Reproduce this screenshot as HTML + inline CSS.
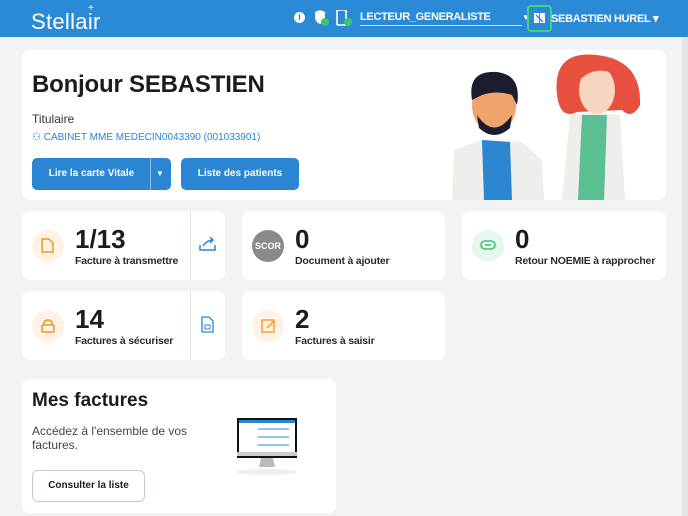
<!DOCTYPE html><html><head><meta charset="utf-8"><style>
*{box-sizing:border-box;margin:0;padding:0}
body{width:688px;height:516px;overflow:hidden;background:#f3f3f3;font-family:"Liberation Sans",sans-serif;position:relative;color:#1c1c1c}
.hdr{position:absolute;left:0;top:0;width:688px;height:37px;background:#2a8ad6;color:#fff}
.card{position:absolute;background:#fff;border-radius:8px}
.ab{position:absolute}
.circ{position:absolute;width:32px;height:32px;border-radius:50%}
.num{position:absolute;font-size:26px;font-weight:bold;color:#1c1c1c}
.lbl{position:absolute;font-size:10.5px;font-weight:bold;color:#2a2a2a;white-space:nowrap;letter-spacing:-0.2px}
.btn{position:absolute;background:#2a86d3;color:#fff;font-size:10px;font-weight:bold;border-radius:5px;text-align:center;line-height:32px}
</style></head><body>
<div class="hdr">
<div class="ab" style="left:31px;top:9px;font-size:22px;font-weight:300;letter-spacing:0.3px">Stellair</div>
<div class="ab" style="left:88px;top:3px;font-size:10px">+</div>
<div class="ab" style="left:294px;top:12px;width:11px;height:11px;border-radius:50%;background:#fff;color:#2a8ad6;font-size:9px;font-weight:bold;text-align:center;line-height:11px">i</div>
<svg class="ab" style="left:313px;top:10px" width="18" height="18"><path d="M2 2 L7 0 L12 2 L12 7 Q12 12 7 14 Q2 12 2 7Z" fill="#fff"/><circle cx="12" cy="12" r="4" fill="#3cc37a"/></svg>
<svg class="ab" style="left:336px;top:10px" width="18" height="18"><rect x="1" y="0" width="9" height="15" rx="1" fill="none" stroke="#fff" stroke-width="1.6"/><circle cx="12" cy="12" r="4" fill="#3cc37a"/></svg>
<div class="ab" style="left:360px;top:11px;font-size:11px;font-weight:bold;letter-spacing:-0.3px">LECTEUR_GENERALISTE</div>
<div class="ab" style="left:360px;top:25px;width:162px;height:1px;background:#cfe4f7"></div>
<div class="ab" style="left:522px;top:13px;font-size:8px">▼</div>
<div class="ab" style="left:527px;top:5px;width:25px;height:27px;border:2px solid #44d083;border-radius:4px"></div>
<svg class="ab" style="left:534px;top:12px" width="12" height="12"><rect x="0" y="1" width="5" height="10" fill="#fff"/><rect x="6" y="1" width="5" height="10" fill="#fff"/><path d="M2 3 L9 10" stroke="#2a8ad6" stroke-width="1.4"/></svg>
<div class="ab" style="left:551px;top:12px;font-size:11px;font-weight:bold;letter-spacing:-0.3px">SEBASTIEN HUREL ▾</div>
</div>
<div class="ab" style="left:682px;top:37px;width:6px;height:479px;background:#e6e6e6"></div>

<div class="card" style="left:22px;top:50px;width:644px;height:150px">
<div class="ab" style="left:10px;top:21px;font-size:24px;font-weight:bold;letter-spacing:-0.2px">Bonjour SEBASTIEN</div>
<div class="ab" style="left:10px;top:62px;font-size:12px;color:#333">Titulaire</div>
<div class="ab" style="left:10px;top:82px;font-size:10px;color:#2a86d3">⚇ CABINET MME MEDECIN0043390 (001033901)</div>
<div class="btn" style="left:10px;top:108px;width:139px;height:32px;padding-right:20px">Lire la carte Vitale</div>
<div class="ab" style="left:128px;top:108px;width:1px;height:32px;background:#8fc0ea"></div>
<div class="ab" style="left:134px;top:119px;color:#fff;font-size:8px">▼</div>
<div class="btn" style="left:159px;top:108px;width:118px;height:32px">Liste des patients</div>
<svg class="ab" style="left:420px;top:0" width="224" height="150">
<path d="M10 150 L12 100 L40 90 L80 92 L100 110 L102 150Z" fill="#eeeeea"/>
<path d="M40 90 L68 92 L70 150 L42 150Z" fill="#2d86d0"/>
<ellipse cx="52" cy="55" rx="22" ry="28" fill="#f0a36c"/>
<path d="M30 50 Q25 20 55 22 Q80 25 75 55 L70 45 Q55 40 40 45Z" fill="#1b1c2e"/>
<path d="M35 65 Q52 90 70 65 L68 78 Q52 92 37 78Z" fill="#1b1c2e"/>
<path d="M120 150 L128 65 L150 62 L178 65 L183 150Z" fill="#eeeeea"/>
<path d="M140 65 L165 65 L162 150 L136 150Z" fill="#5cbf94"/>
<path d="M115 45 Q110 0 155 5 Q200 10 198 55 Q190 70 180 60 L135 62 Q118 70 115 45Z" fill="#e8503f"/>
<ellipse cx="155" cy="40" rx="18" ry="24" fill="#f6d6bf"/>
<path d="M135 20 Q160 5 180 30 L175 25 Q155 15 140 28Z" fill="#e8503f"/>
</svg>
</div>

<div class="card" style="left:22px;top:211px;width:203px;height:69px">
<div class="circ" style="left:10px;top:19px;background:#fff3e5"></div>
<svg class="ab" style="left:19px;top:27px" width="14" height="16"><path d="M1 1 H8 L12 5 V14 H1Z" fill="none" stroke="#f6941c" stroke-width="1.5"/></svg>
<div class="num" style="left:53px;top:13px">1/13</div>
<div class="lbl" style="left:53px;top:44px">Facture à transmettre</div>
<div class="ab" style="left:168px;top:0;width:1px;height:69px;background:#dde3ea"></div>
<svg class="ab" style="left:177px;top:26px" width="18" height="16"><path d="M1 8 V13 H16 V8 M4 9 Q8 3 14 3 M11 0 L14 3 L11 6" fill="none" stroke="#2a86d3" stroke-width="1.5"/></svg>
</div>
<div class="card" style="left:242px;top:211px;width:203px;height:69px">
<div class="circ" style="left:10px;top:19px;background:#8a8a8a;color:#fff;font-size:9px;font-weight:bold;text-align:center;line-height:32px">SCOR</div>
<div class="num" style="left:53px;top:13px">0</div>
<div class="lbl" style="left:53px;top:44px">Document à ajouter</div>
</div>
<div class="card" style="left:462px;top:211px;width:204px;height:69px">
<div class="circ" style="left:10px;top:19px;background:#e4f8ee"></div>
<svg class="ab" style="left:18px;top:29px" width="16" height="10"><rect x="1" y="1" width="14" height="8" rx="4" fill="none" stroke="#3cc37a" stroke-width="1.6"/><path d="M5 5 H11" stroke="#3cc37a" stroke-width="1.6"/></svg>
<div class="num" style="left:53px;top:13px">0</div>
<div class="lbl" style="left:53px;top:44px">Retour NOEMIE à rapprocher</div>
</div>
<div class="card" style="left:22px;top:291px;width:203px;height:69px">
<div class="circ" style="left:10px;top:19px;background:#fff3e5"></div>
<svg class="ab" style="left:19px;top:27px" width="14" height="16"><path d="M3 7 V4 Q7 0 11 4 V7" fill="none" stroke="#f6941c" stroke-width="1.5"/><rect x="1" y="7" width="12" height="7" rx="1" fill="none" stroke="#f6941c" stroke-width="1.5"/></svg>
<div class="num" style="left:53px;top:13px">14</div>
<div class="lbl" style="left:53px;top:44px">Factures à sécuriser</div>
<div class="ab" style="left:168px;top:0;width:1px;height:69px;background:#dde3ea"></div>
<svg class="ab" style="left:179px;top:25px" width="14" height="18"><path d="M1 1 H8 L12 5 V16 H1Z" fill="none" stroke="#2a86d3" stroke-width="1.3"/><rect x="4" y="9" width="5" height="4" fill="none" stroke="#2a86d3"/></svg>
</div>
<div class="card" style="left:242px;top:291px;width:203px;height:69px">
<div class="circ" style="left:10px;top:19px;background:#fff3e5"></div>
<svg class="ab" style="left:19px;top:27px" width="16" height="16"><rect x="1" y="2" width="12" height="12" fill="none" stroke="#f6941c" stroke-width="1.3"/><path d="M6 10 L13 3" stroke="#f6941c" stroke-width="1.5"/></svg>
<div class="num" style="left:53px;top:13px">2</div>
<div class="lbl" style="left:53px;top:44px">Factures à saisir</div>
</div>

<div class="card" style="left:22px;top:379px;width:314px;height:134px">
<div class="ab" style="left:10px;top:11px;font-size:19px;font-weight:bold">Mes factures</div>
<div class="ab" style="left:10px;top:45px;font-size:12px;color:#444;line-height:14px">Accédez à l'ensemble de vos<br>factures.</div>
<div class="ab" style="left:10px;top:91px;width:113px;height:32px;border:1px solid #c8c8d8;border-radius:6px;text-align:center;line-height:30px;font-size:10px;font-weight:bold">Consulter la liste</div>
<svg class="ab" style="left:212px;top:38px" width="66" height="60"><ellipse cx="33" cy="55" rx="30" ry="3" fill="#eee"/><rect x="3" y="1" width="60" height="40" fill="#111"/><rect x="5" y="3" width="56" height="32" fill="#fff"/><rect x="5" y="3" width="56" height="3" fill="#2a86d3"/><path d="M24 12 H55 M24 20 H55 M24 28 H55" stroke="#2a86d3" stroke-width="1"/><rect x="3" y="35" width="60" height="4" fill="#ccc"/><path d="M27 41 H39 L41 50 H25Z" fill="#bbb"/></svg>
</div>
</body></html>
